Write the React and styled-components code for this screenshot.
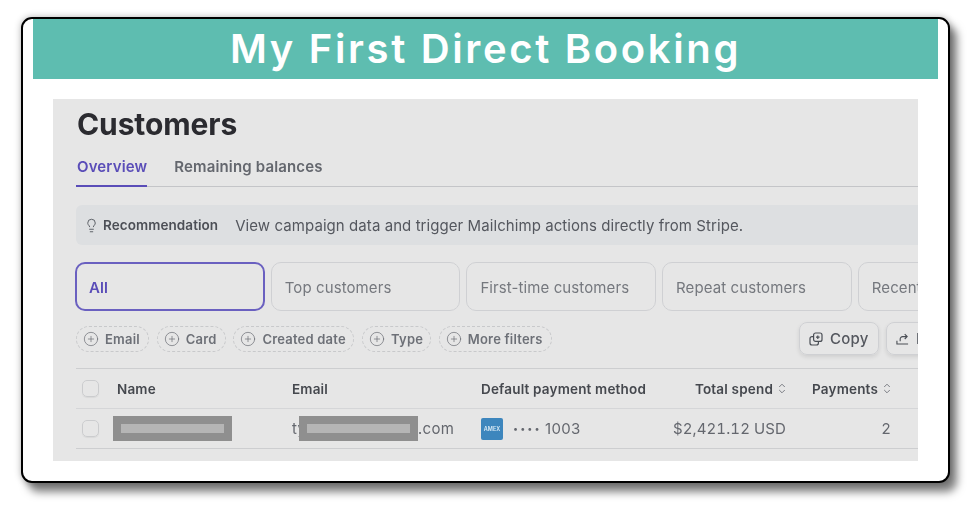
import React from 'react'
import styled, { createGlobalStyle } from 'styled-components'
import { CirclePlus, Lightbulb } from 'lucide-react'

const GlobalStyle = createGlobalStyle`
html, body {
    margin: 0;
    height: 100%;
    background: #fff;
    font-family: Inter, "Liberation Sans", sans-serif;
}
#root {
    height: 100%;
    overflow: hidden;
}
`

const tiles = ['All', 'Top customers', 'First-time customers', 'Repeat customers', 'Recent customers']
const filters = [
    { label: 'Email', width: 73 },
    { label: 'Card', width: 69 },
    { label: 'Created date', width: 121 },
    { label: 'Type', width: 69 },
    { label: 'More filters', width: 113 },
]

function CopyIcon() {
    return (
        <svg width="14" height="14" viewBox="0 0 14 14" fill="none" stroke="#4a4e55" strokeWidth="1.2">
            <rect x="4.6" y="1" width="8.4" height="8.4" rx="2" />
            <path d="M4.6 4.6H3a2 2 0 0 0-2 2V11a2 2 0 0 0 2 2h4.4a2 2 0 0 0 2-2V9.4" />
            <path d="M7 5.2h3.6M8.8 3.4v3.6" />
        </svg>
    )
}

function ShareIcon() {
    return (
        <svg width="13" height="14" viewBox="0 0 14 14" fill="none" stroke="#4a4e55" strokeWidth="1.2">
            <path d="M1 9v3.4h12" />
            <path d="M4.5 9.5V7a2.6 2.6 0 0 1 2.6-2.6H12M9.4 1.8 12 4.4 9.4 7" />
        </svg>
    )
}

function SortIcon() {
    return (
        <svg width="8" height="11" viewBox="0 0 8 11" fill="none" stroke="#6f7379" strokeWidth="0.9">
            <path d="M1.2 4 4 1.2 6.8 4M1.2 7 4 9.8 6.8 7" />
        </svg>
    )
}

export default function App() {
    return (
        <Card>
            <GlobalStyle />
            <Banner>My First Direct Booking</Banner>
            <Panel>
                <Content>
                    <Title>Customers</Title>
                    <Tabs>
                        <Tab $active>Overview</Tab>
                        <Tab>Remaining balances</Tab>
                    </Tabs>
                    <Recommendation>
                        <Lightbulb size={15} strokeWidth={1.4} color="#4d5158" />
                        <strong>Recommendation</strong>
                        <span>View campaign data and trigger Mailchimp actions directly from Stripe.</span>
                    </Recommendation>
                    <TileRow>
                        {tiles.map((t, i) => (
                            <Tile key={t} $active={i === 0}>{t}</Tile>
                        ))}
                    </TileRow>
                    <FilterRow>
                        {filters.map((f) => (
                            <FilterPill key={f.label} $width={f.width}>
                                <CirclePlus size={16} strokeWidth={1} color="#63676e" />
                                {f.label}
                            </FilterPill>
                        ))}
                        <Actions>
                            <ActionButton>
                                <CopyIcon />
                                Copy
                            </ActionButton>
                            <ActionButton>
                                <ShareIcon />
                                Export
                            </ActionButton>
                        </Actions>
                    </FilterRow>
                    <HeadRow>
                        <Check />
                        <div>Name</div>
                        <div>Email</div>
                        <div>Default payment method</div>
                        <RightCell>Total spend<SortIcon /></RightCell>
                        <RightCell>Payments<SortIcon /></RightCell>
                    </HeadRow>
                    <BodyRow>
                        <Check />
                        <NameCell>
                            <Redaction />
                        </NameCell>
                        <EmailCell>
                            <Hidden>ty</Hidden>
                            <Redaction />
                            .com
                        </EmailCell>
                        <PaymentCell>
                            <Amex>AMEX</Amex>
                            <Dots>••••</Dots>
                            1003
                        </PaymentCell>
                        <RightCell>$2,421.12 USD</RightCell>
                        <RightCell>2</RightCell>
                    </BodyRow>
                </Content>
            </Panel>
        </Card>
    )
}

const Card = styled.div`
box-sizing: border-box;
width: 929px;
height: 466px;
margin: 17px 0 0 21px;
padding: 0 10px;
background: #fff;
border: 2px solid #000;
border-radius: 11px;
box-shadow: 7px 9px 8px rgba(0, 0, 0, 0.5), 0 0 7px rgba(0, 0, 0, 0.3);
`

const Banner = styled.div`
height: 60px;
padding-bottom: 2px;
box-sizing: border-box;
background: #5ebdb0;
color: #fff;
display: flex;
align-items: center;
justify-content: center;
font-weight: 600;
font-size: 40px;
letter-spacing: 2.65px;
`

const Panel = styled.div`
margin: 20px 20px 0;
height: 362px;
background: #e6e6e6;
overflow: hidden;
`

const Content = styled.div`
padding-left: 23px;
width: 1100px;
filter: blur(0.35px);
`

const Title = styled.div`
height: 49px;
padding: 3px 0 0 1px;
box-sizing: border-box;
font-size: 30px;
line-height: 44px;
font-weight: 700;
letter-spacing: -0.1px;
color: #2b2b30;
`

const Tabs = styled.div`
display: flex;
gap: 26px;
height: 39px;
width: 842px;
box-sizing: border-box;
border-bottom: 1px solid #c4c5c8;
`

const Tab = styled.div`
height: 39px;
box-sizing: border-box;
padding: 9px 0 0 1px;
font-size: 15px;
line-height: 20px;
font-weight: 600;
letter-spacing: 0.15px;
color: ${(p) => (p.$active ? '#5a4db8' : '#64676e')};
border-bottom: ${(p) => (p.$active ? '2px solid #5a4db8' : 'none')};
`

const Recommendation = styled.div`
display: flex;
align-items: center;
margin-top: 18px;
height: 40px;
padding-left: 8px;
width: 840px;
border-radius: 6px 0 0 6px;
background: #dddfe1;
font-size: 15px;
letter-spacing: 0.07px;
color: #54575e;

svg { margin-right: 4px; }

strong {
    font-size: 13.5px;
    font-weight: 600;
    margin-right: 17px;
    color: #4c4f56;
}
`

const TileRow = styled.div`
display: flex;
gap: 6.2px;
margin: 17px 0 0 -1px;
`

const Tile = styled.div`
box-sizing: border-box;
width: 189.5px;
height: 49px;
padding-left: ${(p) => (p.$active ? '12px' : '13px')};
padding-top: 2px;
display: flex;
align-items: center;
font-size: 15px;
letter-spacing: 0.1px;
font-weight: ${(p) => (p.$active ? 600 : 400)};
color: ${(p) => (p.$active ? '#5a4db8' : '#75787e')};
border: ${(p) => (p.$active ? '2px solid #6a60c0' : '1px solid #cfd0d3')};
border-radius: 10px;
`

const FilterRow = styled.div`
display: flex;
align-items: center;
gap: 7.7px;
height: 33px;
width: 842px;
margin-top: 11px;
`

const FilterPill = styled.div`
box-sizing: border-box;
width: ${(p) => p.$width}px;
height: 26px;
display: flex;
align-items: center;
gap: 6px;
padding-left: 6px;
border: 1px dashed #c8c9cb;
border-radius: 13px;
font-size: 13px;
font-weight: 600;
letter-spacing: 0.2px;
color: #6d7077;
`

const Actions = styled.div`
display: flex;
gap: 7px;
margin-left: auto;
margin-right: -48px;
`

const ActionButton = styled.div`
box-sizing: border-box;
width: 80px;
height: 33px;
padding-left: 9px;
display: flex;
align-items: center;
gap: 7px;
border: 1px solid #cfd0d3;
border-radius: 8px;
box-shadow: 0 2px 4px rgba(0, 0, 0, 0.1);
font-size: 15px;
letter-spacing: 0.2px;
font-weight: 500;
color: #54575e;

svg { flex-shrink: 0; }
`

const Row = styled.div`
display: grid;
grid-template-columns: 35px 175px 189px 184px 121px 105px;
align-items: center;
height: 40px;
width: 842px;
padding-left: 6px;
box-sizing: border-box;
`

const HeadRow = styled(Row)`
height: 41px;
margin-top: 13px;
border-top: 1px solid #cdced0;
border-bottom: 1px solid #d5d6d8;
font-size: 13.5px;
letter-spacing: 0.18px;
font-weight: 600;
color: #45484e;
`

const BodyRow = styled(Row)`
border-bottom: 1px solid #cdced0;
font-size: 15px;
letter-spacing: 0.1px;
font-variant-numeric: tabular-nums;
color: #64676e;
`

const Check = styled.div`
width: 17px;
height: 17px;
box-sizing: border-box;
border: 1px solid #cbccce;
border-radius: 5px;
box-shadow: 0 1px 1px rgba(0, 0, 0, 0.06);
`

const RightCell = styled.div`
display: flex;
align-items: center;
justify-content: flex-end;
gap: 5px;
white-space: pre;
`

const NameCell = styled.div`
margin-left: -4px;
`

const EmailCell = styled.div`
display: flex;
align-items: center;
letter-spacing: 0.4px;
`

const Hidden = styled.span`
width: 7px;
white-space: nowrap;
`

const Redaction = styled.div`
box-sizing: border-box;
width: 119px;
height: 25px;
flex-shrink: 0;
background: #b5b5b5;
border: solid #8f8f8f;
border-width: 8px;
`

const PaymentCell = styled.div`
display: flex;
align-items: center;
font-variant-numeric: normal;
letter-spacing: 0.3px;
`

const Amex = styled.div`
width: 22px;
height: 22px;
border-radius: 2px;
background: #3d86bd;
color: #dcecf6;
font-size: 5.5px;
font-weight: 600;
letter-spacing: 0;
line-height: 22px;
text-align: center;
margin-right: 10px;
`

const Dots = styled.span`
width: 32px;
font-size: 9px;
letter-spacing: 2.1px;
`
